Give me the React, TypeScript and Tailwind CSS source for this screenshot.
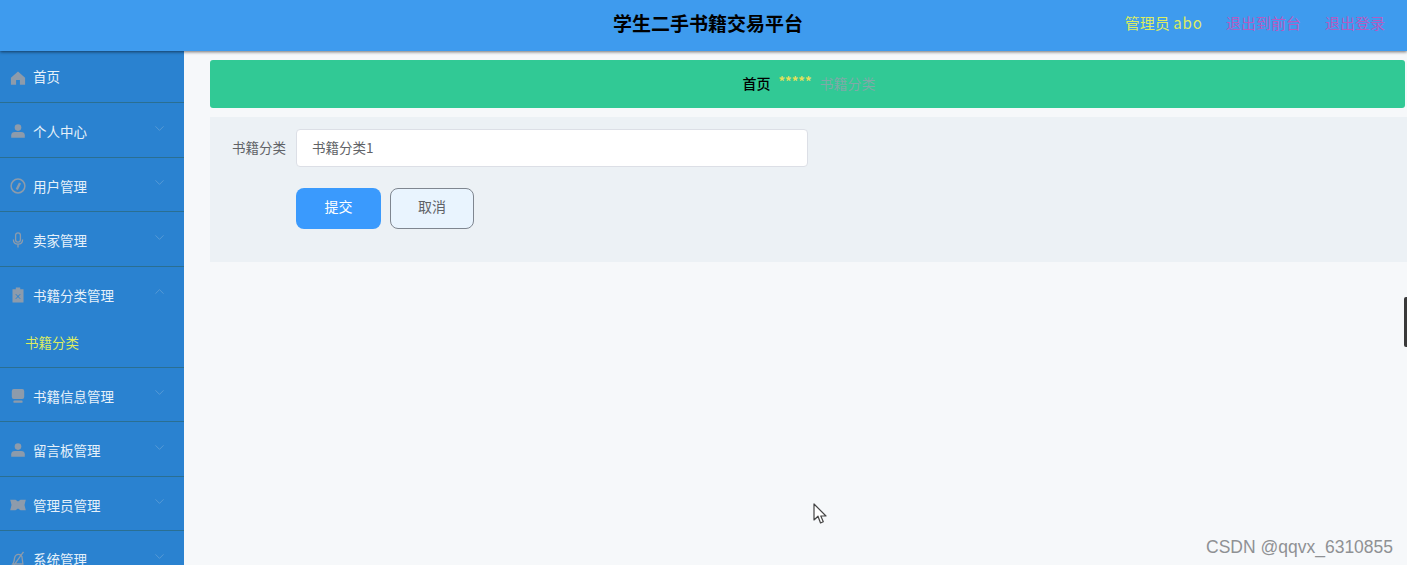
import React from "react";
import { ChevronDown, ChevronUp } from "lucide-react";

const font = "font-['Noto_Sans_CJK_SC','Noto_Sans',sans-serif]";

const iconClass = "w-[16px] h-[16px] text-[#8d9bab] shrink-0";

function HomeIcon() {
    return (
        <svg viewBox="0 0 16 16" className={`${iconClass} mt-[3px]`} fill="currentColor">
            <path d="M8 1.500.9 7.800v7h5.200V10h3.800v4.800h5.200v-7z" />
        </svg>
    );
}

function UserIcon() {
    return (
        <svg viewBox="0 0 16 16" className={iconClass} fill="currentColor">
            <circle cx="8" cy="4.600" r="3.300" />
            <path d="M1.200 14.800v-2.500c0-2 1.700-3.200 3.500-3.200h6.600c1.800 0 3.500 1.200 3.500 3.200v2.500z" />
        </svg>
    );
}

function GaugeIcon() {
    return (
        <svg viewBox="0 0 16 16" className={iconClass} fill="none" stroke="currentColor" strokeWidth="1.500">
            <circle cx="8" cy="8" r="6.900" />
            <path d="M6.800 11.500 10 5" strokeWidth="2.400" />
        </svg>
    );
}

function MicIcon() {
    return (
        <svg viewBox="0 0 16 16" className={iconClass} fill="none" stroke="currentColor" strokeWidth="1.300">
            <rect x="5.600" y="0.800" width="4.800" height="9.400" rx="2.400" />
            <path d="M3.400 7.500c0 2.800 2 4.600 4.600 4.600s4.600-1.800 4.600-4.600M8 12v3.400" />
        </svg>
    );
}

function ClipboardIcon() {
    return (
        <svg viewBox="0 0 16 16" className={iconClass} fill="currentColor">
            <path d="M5.800.5h4.400v1.700h3.300v13.300h-11V2.200h3.300z" />
            <path d="m5.800 7.200 4.400 4.600m0-4.600-4.400 4.600" stroke="#2a82d0" strokeWidth="1" />
        </svg>
    );
}

function MonitorIcon() {
    return (
        <svg viewBox="0 0 16 16" className={iconClass} fill="currentColor">
            <rect x="1.800" y="1" width="12.400" height="10" rx="2" />
            <rect x="3.500" y="12.600" width="9" height="2.200" rx="0.600" />
        </svg>
    );
}

function TicketIcon() {
    return (
        <svg viewBox="0 0 16 16" className={iconClass} fill="currentColor">
            <path d="M.2 2.800h5.300L8 4.600l2.500-1.800h5.300l-1.300 5.200 1.300 5.200h-5.300L8 11.400l-2.500 1.800H.2L1.500 8z" />
        </svg>
    );
}

function BellOffIcon() {
    return (
        <svg viewBox="0 0 16 16" className={iconClass} fill="none" stroke="currentColor" strokeWidth="1.300">
            <path d="M2.800 13c1.400-1.600 1.400-3.700 1.700-5.600C4.900 5 6.300 3.400 8.500 3.400c1.500 0 2.800.8 3.400 2.100l1 7.500zM13.500 .8 3 15.500" />
        </svg>
    );
}

type MenuItem = {
    label: string;
    icon: React.ReactNode;
    arrow?: "up" | "down";
    children?: string[];
};

const menu: MenuItem[] = [
    { label: "首页", icon: <HomeIcon /> },
    { label: "个人中心", icon: <UserIcon />, arrow: "down" },
    { label: "用户管理", icon: <GaugeIcon />, arrow: "down" },
    { label: "卖家管理", icon: <MicIcon />, arrow: "down" },
    { label: "书籍分类管理", icon: <ClipboardIcon />, arrow: "up", children: ["书籍分类"] },
    { label: "书籍信息管理", icon: <MonitorIcon />, arrow: "down" },
    { label: "留言板管理", icon: <UserIcon />, arrow: "down" },
    { label: "管理员管理", icon: <TicketIcon />, arrow: "down" },
    { label: "系统管理", icon: <BellOffIcon />, arrow: "down" },
];

function Sidebar() {
    return (
        <aside className="w-[184px] shrink-0 bg-[#2a82d0] overflow-hidden">
            {menu.map((item, i) => (
                <div key={item.label} className="border-b border-[#2a6f92]">
                    <div className={`flex items-center pl-[10px] pr-[17px] ${i === 0 ? "h-[51px]" : "h-[53.5px] pt-[3px]"}`}>
                        {item.icon}
                        <span className="ml-[7px] text-[13.5px] text-[#e6f1fa] flex-1">{item.label}</span>
                        {item.arrow === "down" && <ChevronDown size={15} strokeWidth={1} className="text-[#6fa6d8] -mt-[6px]" />}
                        {item.arrow === "up" && <ChevronUp size={15} strokeWidth={1} className="text-[#6fa6d8] -mt-[6px]" />}
                    </div>
                    {item.children?.map((child) => (
                        <div key={child} className="h-[46.5px] pl-[25px] pb-[3px] flex items-center text-[13.5px] text-[#dcec62]">
                            {child}
                        </div>
                    ))}
                </div>
            ))}
        </aside>
    );
}

export default function App() {
    return (
        <div className={`relative h-screen overflow-hidden flex flex-col bg-[#f6f8fa] ${font}`}>
            <header className="relative z-10 h-[51px] shrink-0 bg-[#3e9bee] shadow-[0_1px_3px_rgba(0,0,0,0.55)] flex items-center justify-end pr-[22px] pb-[5px]">
                <h1 className="absolute left-[613px] top-[9px] text-[19px] leading-[28px] font-bold text-black">学生二手书籍交易平台</h1>
                <span className="text-[15px] text-[#dcec62] mr-[23px]">
                    管理员 <span className="tracking-[1px]">abo</span>
                </span>
                <span className="text-[15px] text-[#b45cc2] mr-[24px]">退出到前台</span>
                <span className="text-[15px] text-[#b45cc2]">退出登录</span>
            </header>
            <div className="flex flex-1 min-h-0">
                <Sidebar />
                <main className="flex-1 pl-[26px] pt-[9px]">
                    <div className="h-[48px] mr-[2px] pb-[2px] pl-[3px] rounded-[3px] bg-[#31c995] flex items-center justify-center text-[14px]">
                        <span className="font-medium text-black">首页</span>
                        <span className="mx-[8px] mb-[4px] text-[13px] font-bold text-[#e4e05a]">*****</span>
                        <span className="text-[#7fa9a8]">书籍分类</span>
                    </div>
                    <div className="mt-[9px] h-[145px] bg-[#ecf1f5] pt-[12px]">
                        <div className="flex items-center">
                            <label className="w-[76px] pb-[1px] text-right text-[13.500px] text-[#606266]">书籍分类</label>
                            <div className="ml-[10px] w-[512px] h-[38px] pb-[1px] bg-white border border-[#dcdfe6] rounded-[4px] flex items-center px-[15px] text-[13.500px] text-[#606266]">
                                书籍分类1
                            </div>
                        </div>
                        <div className="flex gap-[9px] ml-[86px] mt-[21px]">
                            <button className="w-[85px] h-[41px] pb-[4px] rounded-[8px] bg-[#3a9afd] text-white text-[14px]">提交</button>
                            <button className="w-[84px] h-[41px] pb-[4px] rounded-[8px] bg-[#e9f4fe] border border-[#7f8690] text-[#606266] text-[14px]">取消</button>
                        </div>
                    </div>
                </main>
            </div>

            {/* edge handle, cursor and watermark from the capture */}
            <div className="absolute right-0 top-[297px] w-[3px] h-[50px] rounded-l-[2px] bg-[#3a3a3a]" />
            <svg viewBox="0 0 14 22" className="absolute left-[813px] top-[503px] w-[14px] h-[22px]">
                <path d="M1 1v16l4-3.800L7.500 20l2.800-1.200L7.800 13H13z" fill="#fff" stroke="#444" strokeWidth="1.200" strokeLinejoin="round" />
            </svg>
            <span className="absolute left-[1206px] top-[537px] text-[17.500px] leading-[20px] text-[#8f9194] font-['Liberation_Sans',sans-serif]">CSDN @qqvx_6310855</span>
        </div>
    );
}
